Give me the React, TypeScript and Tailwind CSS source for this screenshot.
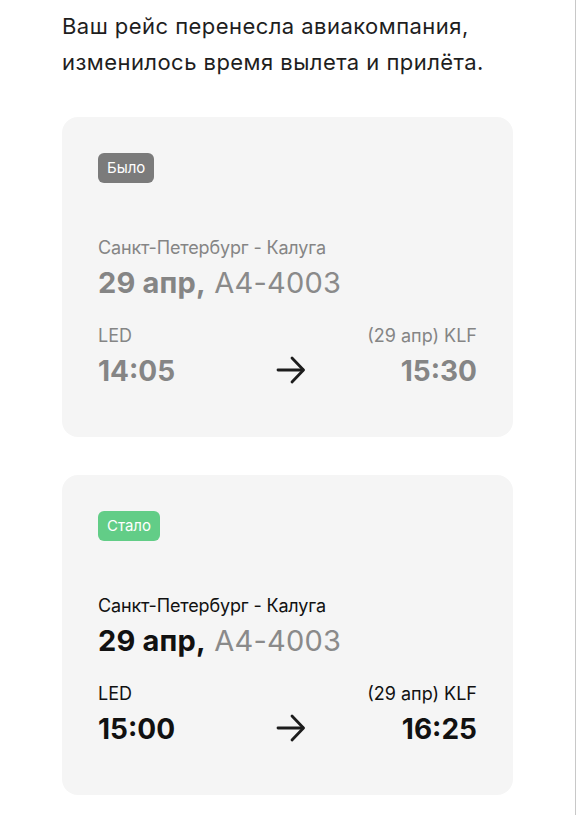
import React from "react";

type Flight = {
  label: string;
  badgeClass: string;
  muted: boolean;
  depTime: string;
  arrTime: string;
};

const flights: Flight[] = [
  { label: "Было", badgeClass: "bg-[#7b7b7b]", muted: true, depTime: "14:05", arrTime: "15:30" },
  { label: "Стало", badgeClass: "bg-[#62cd87]", muted: false, depTime: "15:00", arrTime: "16:25" },
];

const Arrow: React.FC = () => (
  <svg width="30" height="28" viewBox="0 0 30 28" fill="none" className="text-[#1c1c1c]">
    <path d="M2 14H27" stroke="currentColor" strokeWidth="2.8" strokeLinecap="round" />
    <path d="M16 2L27.5 14L16 26" stroke="currentColor" strokeWidth="2.8" strokeLinecap="round" strokeLinejoin="round" />
  </svg>
);

const FlightCard: React.FC<{ flight: Flight }> = ({ flight }) => {
  const main = flight.muted ? "text-[#858585]" : "text-[#111111]";
  return (
    <div className="rounded-2xl bg-[#f5f5f5] px-9 pt-9 pb-[49px]">
      <span
        className={`inline-flex h-[30px] items-center rounded-md px-[9px] text-[15px] text-white ${flight.badgeClass}`}
      >
        {flight.label}
      </span>

      <p className={`mt-[53px] text-[18px] leading-6 tracking-[-0.15px] ${main}`}>Санкт-Петербург - Калуга</p>
      <p className="mt-1.5 text-[29px] leading-[34px] tracking-[0.2px]">
        <span className={`font-bold ${main}`}>29 апр,</span>{" "}
        <span className="text-[#8a8a8a]">A4-4003</span>
      </p>

      <div className="mt-6 grid grid-cols-[1fr_auto_1fr] items-end">
        <div className={main}>
          <p className="text-[18px] leading-6">LED</p>
          <p className="mt-1.5 text-[28px] font-bold leading-[34px]">{flight.depTime}</p>
        </div>
        <div className="ml-[6px] pb-1">
          <Arrow />
        </div>
        <div className={`text-right ${main}`}>
          <p className="text-[18px] leading-6">(29 апр) KLF</p>
          <p className="mt-1.5 text-[28px] font-bold leading-[34px]">{flight.arrTime}</p>
        </div>
      </div>
    </div>
  );
};

const App: React.FC = () => {
  return (
    <div className="min-h-[815px] w-full border-r border-[#c8c8c8] bg-white font-['Inter',sans-serif]">
      <div className="px-[62px] pt-2 pb-5">
        <h1 className="text-[22px] leading-[36px] tracking-[0.45px] text-[#1e1e1e]">
          Ваш рейс перенесла авиакомпания,
          <br />
          изменилось время вылета и прилёта.
        </h1>

        <div className="mt-[37px] flex flex-col gap-[38px]">
          {flights.map((f) => (
            <FlightCard key={f.label} flight={f} />
          ))}
        </div>
      </div>
    </div>
  );
};

export default App;
